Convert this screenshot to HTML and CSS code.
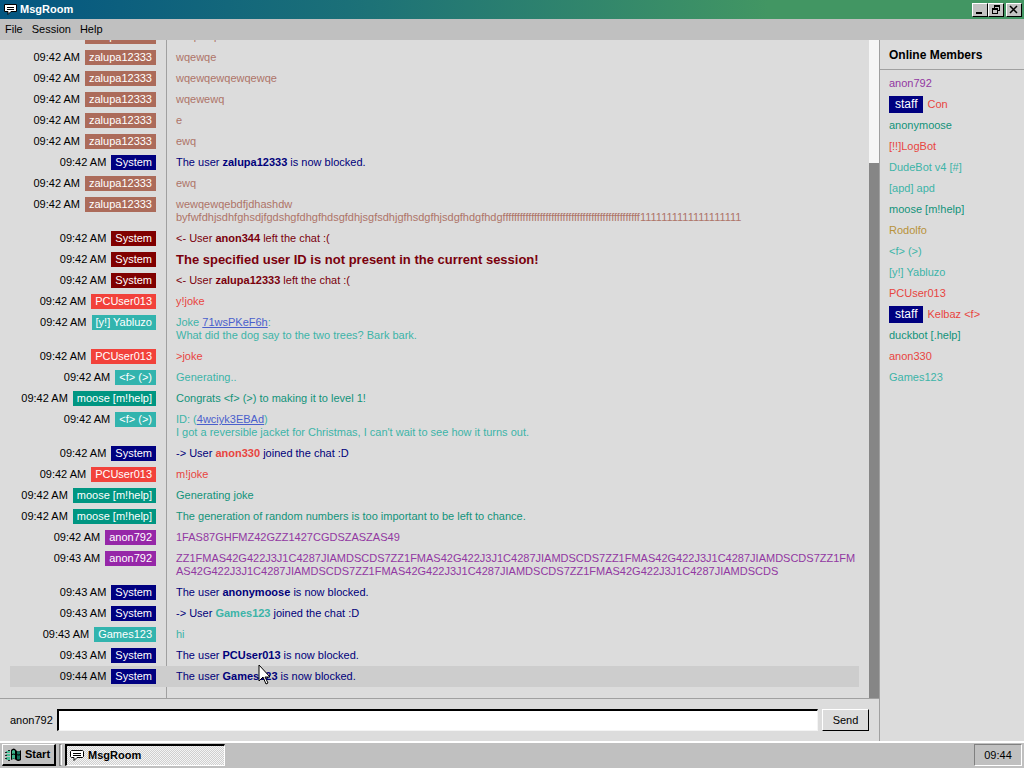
FILE: index.html
```html
<!DOCTYPE html>
<html lang="en">
<head>
<meta charset="utf-8">
<title>MsgRoom</title>
<link rel="stylesheet" href="styles.css">
</head>
<body>
<header class="titlebar">
  <svg class="app-icon" width="15" height="13" viewBox="0 0 15 13"><path d="M1.500 1.500h12v7H8l-3 3v-3H1.500z" fill="#fff" stroke="#000"/><path d="M4 4.500h7M4 6.500h7" stroke="#000"/></svg>
  <h1 class="title">MsgRoom</h1>
  <div class="win-buttons">
    <button class="win-button" aria-label="Minimize"><svg width="10" height="10" viewBox="0 0 10 10"><path d="M1 7h6v2H1z"/></svg></button>
    <button class="win-button" aria-label="Restore"><svg width="10" height="10" viewBox="0 0 10 10"><path d="M3 0h6v6H7V5h1V2H4v1H3zM1 3h6v6H1zM2 5v3h4V5z" fill-rule="evenodd"/></svg></button>
    <button class="win-button close" aria-label="Close"><svg width="10" height="10" viewBox="0 0 10 10"><path d="M1 1l7 7M8 1L1 8" stroke="#000" stroke-width="1.500"/></svg></button>
  </div>
</header>
<nav class="menubar">
  <button class="menu">File</button><button class="menu">Session</button><button class="menu">Help</button>
</nav>
<main class="room">
  <section class="chat">
    <div class="log-wrap">
      <div class="log">
        <div class="row"><div class="who"><time>09:42 AM</time><span class="tag brown">zalupa12333</span></div><p class="msg t-brown">ewqewq</p></div>
        <div class="row"><div class="who"><time>09:42 AM</time><span class="tag brown">zalupa12333</span></div><p class="msg t-brown">wqewqe</p></div>
        <div class="row"><div class="who"><time>09:42 AM</time><span class="tag brown">zalupa12333</span></div><p class="msg t-brown">wqewqewqewqewqe</p></div>
        <div class="row"><div class="who"><time>09:42 AM</time><span class="tag brown">zalupa12333</span></div><p class="msg t-brown">wqewewq</p></div>
        <div class="row"><div class="who"><time>09:42 AM</time><span class="tag brown">zalupa12333</span></div><p class="msg t-brown">e</p></div>
        <div class="row"><div class="who"><time>09:42 AM</time><span class="tag brown">zalupa12333</span></div><p class="msg t-brown">ewq</p></div>
        <div class="row"><div class="who"><time>09:42 AM</time><span class="tag navy">System</span></div><p class="msg t-navy">The user <b>zalupa12333</b> is now blocked.</p></div>
        <div class="row"><div class="who"><time>09:42 AM</time><span class="tag brown">zalupa12333</span></div><p class="msg t-brown">ewq</p></div>
        <div class="row"><div class="who"><time>09:42 AM</time><span class="tag brown">zalupa12333</span></div><p class="msg t-brown">wewqewqebdfjdhashdw<br>byfwfdhjsdhfghsdjfgdshgfdhgfhdsgfdhjsgfsdhjgfhsdgfhjsdgfhdgfhdgffffffffffffffffffffffffffffffffffffffffffffffff1111111111111111111</p></div>
        <div class="row"><div class="who"><time>09:42 AM</time><span class="tag maroon">System</span></div><p class="msg t-maroon">&lt;- User <b>anon344</b> left the chat :(</p></div>
        <div class="row"><div class="who"><time>09:42 AM</time><span class="tag maroon">System</span></div><p class="msg t-maroon alert">The specified user ID is not present in the current session!</p></div>
        <div class="row"><div class="who"><time>09:42 AM</time><span class="tag maroon">System</span></div><p class="msg t-maroon">&lt;- User <b>zalupa12333</b> left the chat :(</p></div>
        <div class="row"><div class="who"><time>09:42 AM</time><span class="tag red">PCUser013</span></div><p class="msg t-red">y!joke</p></div>
        <div class="row"><div class="who"><time>09:42 AM</time><span class="tag aqua">[y!] Yabluzo</span></div><p class="msg t-aqua">Joke <a href="#joke">71wsPKeF6h</a>:<br>What did the dog say to the two trees? Bark bark.</p></div>
        <div class="row"><div class="who"><time>09:42 AM</time><span class="tag red">PCUser013</span></div><p class="msg t-red">&gt;joke</p></div>
        <div class="row"><div class="who"><time>09:42 AM</time><span class="tag aqua">&lt;f&gt; (&gt;)</span></div><p class="msg t-aqua">Generating..</p></div>
        <div class="row"><div class="who"><time>09:42 AM</time><span class="tag teal">moose [m!help]</span></div><p class="msg t-teal">Congrats &lt;f&gt; (&gt;) to making it to level 1!</p></div>
        <div class="row"><div class="who"><time>09:42 AM</time><span class="tag aqua">&lt;f&gt; (&gt;)</span></div><p class="msg t-aqua">ID: (<a href="#id">4wciyk3EBAd</a>)<br>I got a reversible jacket for Christmas, I can't wait to see how it turns out.</p></div>
        <div class="row"><div class="who"><time>09:42 AM</time><span class="tag navy">System</span></div><p class="msg t-navy">-&gt; User <b class="t-red">anon330</b> joined the chat :D</p></div>
        <div class="row"><div class="who"><time>09:42 AM</time><span class="tag red">PCUser013</span></div><p class="msg t-red">m!joke</p></div>
        <div class="row"><div class="who"><time>09:42 AM</time><span class="tag teal">moose [m!help]</span></div><p class="msg t-teal">Generating joke</p></div>
        <div class="row"><div class="who"><time>09:42 AM</time><span class="tag teal">moose [m!help]</span></div><p class="msg t-teal">The generation of random numbers is too important to be left to chance.</p></div>
        <div class="row"><div class="who"><time>09:42 AM</time><span class="tag purple">anon792</span></div><p class="msg t-purple">1FAS87GHFMZ42GZZ1427CGDSZASZAS49</p></div>
        <div class="row"><div class="who"><time>09:43 AM</time><span class="tag purple">anon792</span></div><p class="msg t-purple">ZZ1FMAS42G422J3J1C4287JIAMDSCDS7ZZ1FMAS42G422J3J1C4287JIAMDSCDS7ZZ1FMAS42G422J3J1C4287JIAMDSCDS7ZZ1FMAS42G4<wbr>22J3J1C4287JIAMDSCDS7ZZ1FMAS42G422J3J1C4287JIAMDSCDS7ZZ1FMAS42G422J3J1C4287JIAMDSCDS</p></div>
        <div class="row"><div class="who"><time>09:43 AM</time><span class="tag navy">System</span></div><p class="msg t-navy">The user <b>anonymoose</b> is now blocked.</p></div>
        <div class="row"><div class="who"><time>09:43 AM</time><span class="tag navy">System</span></div><p class="msg t-navy">-&gt; User <b class="t-aqua">Games123</b> joined the chat :D</p></div>
        <div class="row"><div class="who"><time>09:43 AM</time><span class="tag aqua">Games123</span></div><p class="msg t-aqua">hi</p></div>
        <div class="row"><div class="who"><time>09:43 AM</time><span class="tag navy">System</span></div><p class="msg t-navy">The user <b>PCUser013</b> is now blocked.</p></div>
        <div class="row hovered"><div class="who"><time>09:44 AM</time><span class="tag navy">System</span></div><p class="msg t-navy">The user <b>Games123</b> is now blocked.</p>
          <svg class="pointer" width="13" height="21" viewBox="0 0 13 21"><path d="M1 1v16l4-4 3 7 2-1-3-6h5z" fill="#fff" stroke="#000"/></svg></div>
      </div>
      <div class="scrollbar"><div class="thumb"></div></div>
    </div>
    <form class="composer">
      <label for="message">anon792</label>
      <input class="message" id="message" type="text">
      <button class="send" type="button">Send</button>
    </form>
  </section>
  <aside class="members">
    <h2 class="members-title">Online Members</h2>
    <ul class="member-list">
      <li class="t-purple">anon792</li>
      <li class="t-red"><span class="staff">staff</span>Con</li>
      <li class="t-teal">anonymoose</li>
      <li class="t-red">[!!]LogBot</li>
      <li class="t-aqua">DudeBot v4 [#]</li>
      <li class="t-aqua">[apd] apd</li>
      <li class="t-teal">moose [m!help]</li>
      <li class="t-gold">Rodolfo</li>
      <li class="t-aqua">&lt;f&gt; (&gt;)</li>
      <li class="t-aqua">[y!] Yabluzo</li>
      <li class="t-red">PCUser013</li>
      <li class="t-red"><span class="staff">staff</span>Kelbaz &lt;f&gt;</li>
      <li class="t-teal">duckbot [.help]</li>
      <li class="t-red">anon330</li>
      <li class="t-aqua">Games123</li>
    </ul>
  </aside>
</main>
<footer class="taskbar">
  <button class="start"><svg width="17" height="14" viewBox="0 0 17 14"><path d="M6 2q3-3 5 0t5 0v10q-3 2-5 0t-5 0z" fill="#000"/><path d="M7 3q2-2 3 0v3q-1-1-3 0zM7 7q2-1 3 0v4q-1-1-3 0z" fill="#3cb58c"/><path d="M12 3q2 1 3 0v3q-2 1-3 0zM12 7q2 1 3 0v4q-2 1-3 0z" fill="#14705c"/><path d="M1 3h4v2H1zM1 6h4v2H1zM1 9h4v3H1z" fill="#4cc09a"/><path d="M0 4h2v1H0zM0 7h2v1H0zM0 10h2v1H0zM3 12h2v1H3zM3 2h2v1H3z" fill="#222"/></svg>Start</button>
  <span class="divider"></span>
  <button class="task"><svg width="16" height="13" viewBox="0 0 16 13"><path d="M2.500 1.500h11l1 1v5l-1 1H8l-3 3v-3H2.500l-1-1v-5z" fill="#fff" stroke="#000"/><path d="M4 4.500h8M4 6.500h8" stroke="#000"/></svg>MsgRoom</button>
  <time class="clock">09:44</time>
</footer>
</body>
</html>
```
FILE: styles.css
```css
* { box-sizing: border-box; }

body {
  margin: 0;
  height: 100vh;
  display: flex;
  flex-direction: column;
  overflow: hidden;
  background: #dcdcdc;
  color: #000;
  font: 11px/13px "Liberation Sans", Arial, sans-serif;
}

button, input { font: inherit; color: inherit; border-radius: 0; }
button { padding: 0; border: 0; background: none; }
h1, h2, p, ul { margin: 0; padding: 0; font-size: inherit; }

.titlebar {
  flex: none;
  height: 19px;
  padding: 0 2px 0 3px;
  display: flex;
  align-items: center;
  gap: 2px;
  background: linear-gradient(to right, #045681, #1b7078 34%, #429663 75%, #429663);
  color: #fff;
}
.title { flex: 1; }
.win-buttons { display: flex; }
.win-button {
  width: 16px;
  height: 14px;
  display: flex;
  align-items: center;
  justify-content: center;
  background: #c3c3c3;
  border: 1px solid #fff;
  border-right-color: #000;
  border-bottom-color: #000;
}
.close { margin-left: 2px; }

.menubar {
  flex: none;
  height: 21px;
  padding-left: 5px;
  display: flex;
  align-items: center;
  gap: 9px;
  background: #c0c0c0;
}

.room { flex: 1; min-height: 0; display: flex; }
.chat {
  flex: 1;
  min-width: 0;
  display: flex;
  flex-direction: column;
  border-right: 1px solid #a0a0a0;
}
.log-wrap { flex: 1; min-height: 0; display: flex; }
.log {
  flex: 1;
  min-width: 0;
  overflow: hidden;
  padding: 0 10px 11px;
  display: flex;
  flex-direction: column;
  justify-content: flex-end;
  background: linear-gradient(#a0a0a0, #a0a0a0) 166px 0 / 1px 100% no-repeat;
}
.row {
  flex: none;
  position: relative;
  display: grid;
  grid-template-columns: 146px 1fr;
  gap: 20px;
}
.hovered { background: #cdcdcd; }
.who {
  display: flex;
  justify-content: flex-end;
  align-items: flex-start;
  gap: 5px;
  padding-top: 3px;
  line-height: 15px;
}
.tag { padding: 0 4px; color: #fff; }
.msg { padding: 4px 0; min-width: 0; overflow-wrap: anywhere; }
.alert { font-size: 13px; font-weight: bold; }
.msg a { color: #4a5fcc; }
.pointer { position: absolute; left: 248px; top: -2px; }

.brown { background: #ac6b5a; }
.navy { background: #000080; }
.maroon { background: #800000; }
.red { background: #f2423b; }
.aqua { background: #32b4ae; }
.teal { background: #009682; }
.purple { background: #9627a8; }
.t-brown { color: #ae7468; }
.t-navy { color: #00007a; }
.t-maroon { color: #7a000c; }
.t-red { color: #e8453f; }
.t-aqua { color: #3cb4a8; }
.t-teal { color: #12937a; }
.t-purple { color: #9238a2; }
.t-gold { color: #b8923a; }

.scrollbar { flex: none; width: 10px; padding-top: 123px; background: #f6f6f6; }
.thumb { height: 100%; background: #868686; }

.composer {
  flex: none;
  height: 43px;
  padding: 0 10px;
  display: flex;
  align-items: center;
  gap: 4px;
  border-top: 1px solid #a0a0a0;
}
.message {
  flex: 1;
  min-width: 0;
  height: 22px;
  padding: 0 4px;
  background: #fff;
  border: 1px solid #f4f4f4;
  border-top: 2px solid #000;
  border-left: 2px solid #000;
}
.send {
  width: 47px;
  height: 22px;
  border: 1px solid #fff;
  border-right-color: #000;
  border-bottom-color: #000;
}

.members { flex: none; width: 144px; }
.members-title { padding: 9px 9px 7px; border-bottom: 1px solid #a0a0a0; font-size: 12px; }
.member-list { padding: 3px 9px; list-style: none; line-height: 21px; }
.staff {
  display: inline-block;
  margin-right: 4px;
  padding: 0 6px;
  background: #000080;
  color: #fff;
  font-size: 12px;
  line-height: 17px;
}

.taskbar {
  flex: none;
  height: 27px;
  padding: 1px 2px 2px;
  display: flex;
  align-items: center;
  gap: 3px;
  background: #c0c0c0;
  border-top: 2px solid #fff;
}
.start, .task {
  height: 22px;
  display: flex;
  align-items: center;
  gap: 3px;
  font-weight: bold;
}
.start {
  width: 54px;
  padding-left: 2px;
  border: 1px solid #fff;
  border-right: 2px solid #000;
  border-bottom: 2px solid #000;
}
.divider { width: 3px; height: 22px; border: 1px solid #808080; border-right-color: #fff; }
.task {
  width: 160px;
  padding-left: 2px;
  background: repeating-conic-gradient(#f4f4f4 0 25%, #cfcfcf 0 50%) 0 0 / 2px 2px;
  border: 1px solid #fff;
  border-top: 2px solid #000;
  border-left: 2px solid #000;
}
.clock {
  width: 48px;
  height: 22px;
  margin-left: auto;
  text-align: center;
  line-height: 20px;
  border: 1px solid #fff;
  border-top-color: #808080;
  border-left-color: #808080;
}
```
